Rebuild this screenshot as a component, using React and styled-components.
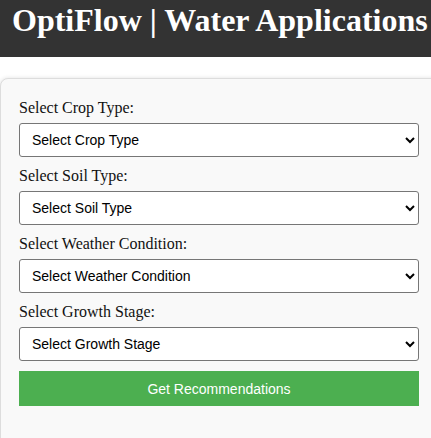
import React from 'react';
import styled, { createGlobalStyle } from 'styled-components';

const GlobalStyle = createGlobalStyle`
  body {
    margin: 0;
    background: #fff;
    font-family: "Liberation Serif", "Times New Roman", serif;
  }
`;

const Page = styled.div`
  width: 100%;
  overflow: hidden;
`;

const Header = styled.header`
  background: #333;
  color: #fff;
  height: 57px;
  box-sizing: border-box;
  padding: 2px 12px 0;

  h1 {
    margin: 0;
    font-size: 32px;
    font-weight: bold;
    white-space: nowrap;
  }
`;

const Card = styled.div`
  margin-top: 21px;
  width: 460px;
  box-sizing: border-box;
  background: #f9f9f9;
  border: 1px solid #ddd;
  border-radius: 8px;
  box-shadow: 0 0 4px rgba(0, 0, 0, 0.12);
  padding: 20px 18px 40px;
`;

const Form = styled.div`
  width: 400px;
`;

const Label = styled.label`
  display: block;
  font-size: 16px;
  line-height: 18px;
  color: #111;
  margin-bottom: 6px;
`;

const Select = styled.select`
  display: block;
  width: 100%;
  height: 34px;
  box-sizing: border-box;
  padding: 0 8px;
  margin-bottom: 10px;
  font-family: "Liberation Sans", Arial, sans-serif;
  font-size: 14px;
  color: #000;
  background: #fff;
  border: 1px solid #767676;
  border-radius: 3px;
`;

const Button = styled.button`
  display: block;
  width: 100%;
  height: 35px;
  border: none;
  background: #4caf50;
  color: #fff;
  font-family: "Liberation Sans", Arial, sans-serif;
  font-size: 14px;
`;

const fields = [
  { label: 'Select Crop Type:', placeholder: 'Select Crop Type' },
  { label: 'Select Soil Type:', placeholder: 'Select Soil Type' },
  { label: 'Select Weather Condition:', placeholder: 'Select Weather Condition' },
  { label: 'Select Growth Stage:', placeholder: 'Select Growth Stage' },
];

const App = () => {
  return (
    <Page>
      <GlobalStyle />
      <Header>
        <h1>OptiFlow | Water Applications</h1>
      </Header>
      <Card>
        <Form>
          {fields.map((f) => (
            <div key={f.label}>
              <Label>{f.label}</Label>
              <Select defaultValue="">
                <option value="">{f.placeholder}</option>
              </Select>
            </div>
          ))}
          <Button>Get Recommendations</Button>
        </Form>
      </Card>
    </Page>
  );
};

export default App;
